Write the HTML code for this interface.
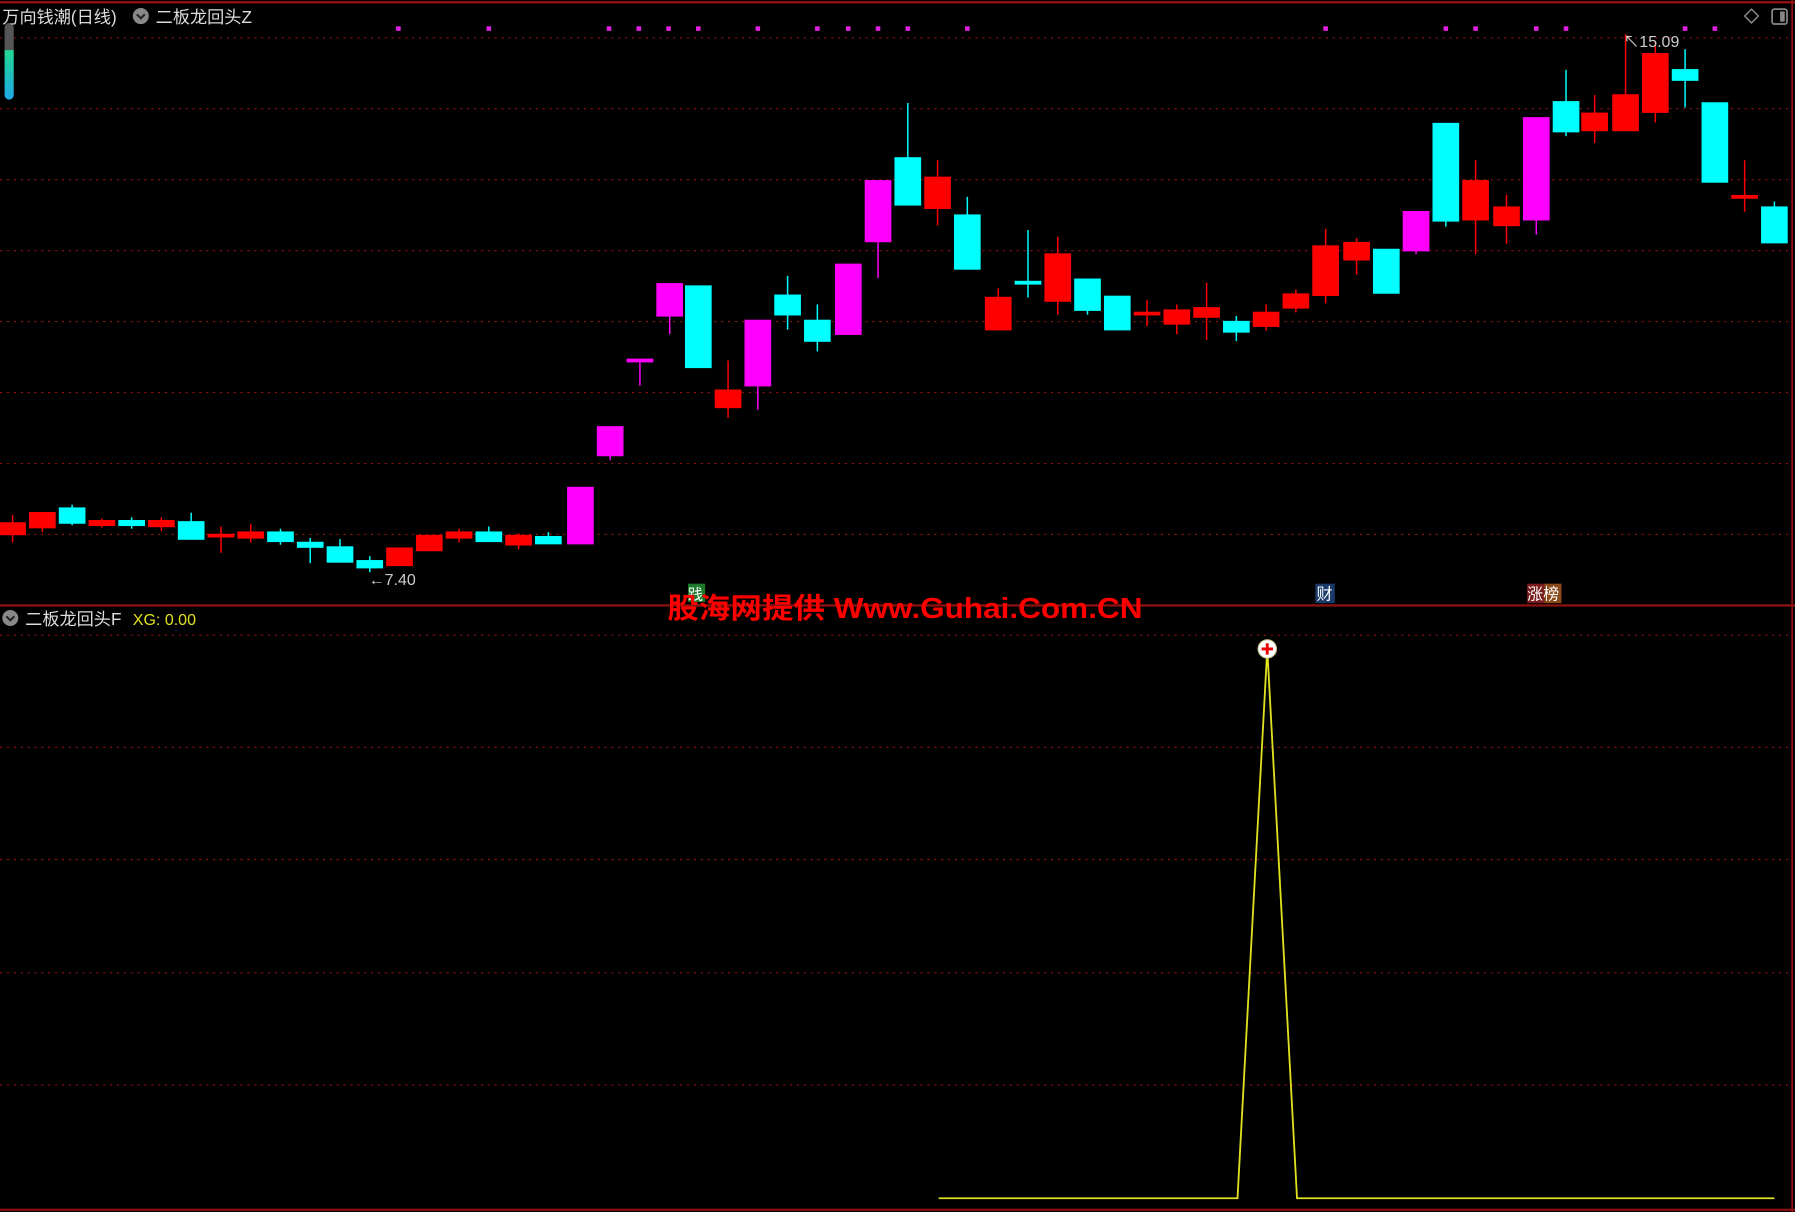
<!DOCTYPE html>
<html><head><meta charset="utf-8"><style>
html,body{margin:0;padding:0;background:#000;width:1795px;height:1212px;overflow:hidden}
svg{display:block}
text{font-family:"Liberation Sans","Noto Sans CJK SC",sans-serif}
</style></head><body>
<svg width="1795" height="1212" viewBox="0 0 1568 1059" preserveAspectRatio="none" xmlns="http://www.w3.org/2000/svg">
<rect width="1568" height="1059" fill="#000"/>
<g stroke="#8b1010" stroke-width="1" stroke-dasharray="2,4">
<line x1="0" y1="33" x2="1565" y2="33"/><line x1="0" y1="95" x2="1565" y2="95"/><line x1="0" y1="157" x2="1565" y2="157"/><line x1="0" y1="219" x2="1565" y2="219"/><line x1="0" y1="281" x2="1565" y2="281"/><line x1="0" y1="343" x2="1565" y2="343"/><line x1="0" y1="405" x2="1565" y2="405"/><line x1="0" y1="467" x2="1565" y2="467"/>
<line x1="0" y1="555" x2="1565" y2="555"/><line x1="0" y1="653" x2="1565" y2="653"/><line x1="0" y1="751" x2="1565" y2="751"/><line x1="0" y1="850" x2="1565" y2="850"/><line x1="0" y1="948" x2="1565" y2="948"/>
</g>
<line x1="0" y1="2" x2="1568" y2="2" stroke="#a01010" stroke-width="2"/>
<line x1="0" y1="529" x2="1568" y2="529" stroke="#8b1010" stroke-width="2"/>
<line x1="0" y1="1057" x2="1568" y2="1057" stroke="#8b1010" stroke-width="2"/>
<line x1="1565.5" y1="0" x2="1565.5" y2="1059" stroke="#8b1010" stroke-width="1.5"/>
<defs><linearGradient id="g" x1="0" y1="0" x2="0" y2="1"><stop offset="0" stop-color="#555"/><stop offset="0.35" stop-color="#555"/><stop offset="0.36" stop-color="#20d890"/><stop offset="1" stop-color="#20a8e8"/></linearGradient></defs>
<rect x="4" y="20" width="8" height="67" rx="4" fill="url(#g)"/>
<text x="2" y="20" fill="#ddd" font-size="15">万向钱潮(日线)</text>
<circle cx="123" cy="14" r="7" fill="#888"/><path d="M119.5 12.5 L123 16 L126.5 12.5" stroke="#222" stroke-width="1.8" fill="none"/>
<text x="136" y="20" fill="#ddd" font-size="15">二板龙回头Z</text>
<path d="M1530 8 L1536 14 L1530 20 L1524 14 Z" fill="none" stroke="#888" stroke-width="1.3"/>
<rect x="1548" y="8" width="13" height="13" rx="2" fill="none" stroke="#888" stroke-width="1.5"/><rect x="1555" y="10" width="4" height="9" fill="#888"/>
<g fill="#e020e0">
<rect x="346" y="23" width="4" height="4"/><rect x="425" y="23" width="4" height="4"/><rect x="530" y="23" width="4" height="4"/><rect x="556" y="23" width="4" height="4"/><rect x="582" y="23" width="4" height="4"/><rect x="608" y="23" width="4" height="4"/><rect x="660" y="23" width="4" height="4"/><rect x="712" y="23" width="4" height="4"/><rect x="739" y="23" width="4" height="4"/><rect x="765" y="23" width="4" height="4"/><rect x="791" y="23" width="4" height="4"/><rect x="843" y="23" width="4" height="4"/><rect x="1156" y="23" width="4" height="4"/><rect x="1261" y="23" width="4" height="4"/><rect x="1287" y="23" width="4" height="4"/><rect x="1340" y="23" width="4" height="4"/><rect x="1366" y="23" width="4" height="4"/><rect x="1470" y="23" width="4" height="4"/><rect x="1496" y="23" width="4" height="4"/>
</g>
<g stroke-width="1.3">
<!-- candles: wick then body -->
<g stroke="#f00" fill="#f00">
<line x1="11" y1="450" x2="11" y2="474"/><rect x="0" y="457" width="22" height="10"/>
<line x1="37" y1="448" x2="37" y2="465"/><rect x="26" y="448" width="22" height="13"/>
<rect x="78" y="455" width="22" height="4"/><line x1="89" y1="453" x2="89" y2="461"/>
<rect x="130" y="455" width="22" height="5"/><line x1="141" y1="452" x2="141" y2="464"/>
<line x1="193" y1="460" x2="193" y2="483"/><rect x="182" y="467" width="22" height="2"/>
<line x1="219" y1="458" x2="219" y2="474"/><rect x="208" y="465" width="22" height="5"/>
<rect x="338" y="479" width="22" height="15"/>
<rect x="364" y="468" width="22" height="13"/>
<line x1="401" y1="462" x2="401" y2="474"/><rect x="390" y="465" width="22" height="5"/>
<line x1="453" y1="466" x2="453" y2="480"/><rect x="442" y="468" width="22" height="8"/>
<line x1="636" y1="315" x2="636" y2="365"/><rect x="625" y="341" width="22" height="15"/>
<line x1="819" y1="140" x2="819" y2="197"/><rect x="808" y="155" width="22" height="27"/>
<line x1="872" y1="252" x2="872" y2="288"/><rect x="861" y="260" width="22" height="28"/>
<line x1="924" y1="207" x2="924" y2="275"/><rect x="913" y="222" width="22" height="41"/>
<line x1="1002" y1="262" x2="1002" y2="285"/><rect x="991" y="273" width="22" height="2"/>
<line x1="1028" y1="266" x2="1028" y2="292"/><rect x="1017" y="271" width="22" height="12"/>
<line x1="1054" y1="247" x2="1054" y2="297"/><rect x="1043" y="269" width="22" height="8"/>
<line x1="1106" y1="266" x2="1106" y2="289"/><rect x="1095" y="273" width="22" height="12"/>
<line x1="1132" y1="253" x2="1132" y2="273"/><rect x="1121" y="257" width="22" height="12"/>
<line x1="1158" y1="200" x2="1158" y2="265"/><rect x="1147" y="215" width="22" height="43"/>
<line x1="1185" y1="208" x2="1185" y2="240"/><rect x="1174" y="212" width="22" height="15"/>
<line x1="1289" y1="140" x2="1289" y2="222"/><rect x="1278" y="158" width="22" height="34"/>
<line x1="1316" y1="170" x2="1316" y2="213"/><rect x="1305" y="181" width="22" height="16"/>
<line x1="1393" y1="83" x2="1393" y2="125"/><rect x="1382" y="99" width="22" height="15"/>
<line x1="1420" y1="30" x2="1420" y2="114"/><rect x="1409" y="83" width="22" height="31"/>
<line x1="1446" y1="36" x2="1446" y2="107"/><rect x="1435" y="47" width="22" height="51"/>
<line x1="1524" y1="140" x2="1524" y2="185"/><rect x="1513" y="171" width="22" height="2"/>
</g>
<g stroke="#0ff" fill="#0ff">
<line x1="63" y1="441" x2="63" y2="459"/><rect x="52" y="444" width="22" height="13"/>
<line x1="115" y1="452" x2="115" y2="462"/><rect x="104" y="455" width="22" height="4"/>
<line x1="167" y1="448" x2="167" y2="471"/><rect x="156" y="456" width="22" height="15"/>
<line x1="245" y1="462" x2="245" y2="476"/><rect x="234" y="465" width="22" height="8"/>
<line x1="271" y1="470" x2="271" y2="492"/><rect x="260" y="474" width="22" height="4"/>
<line x1="297" y1="471" x2="297" y2="491"/><rect x="286" y="478" width="22" height="13"/>
<line x1="323" y1="486" x2="323" y2="500"/><rect x="312" y="490" width="22" height="6"/>
<line x1="427" y1="460" x2="427" y2="473"/><rect x="416" y="465" width="22" height="8"/>
<line x1="479" y1="465" x2="479" y2="475"/><rect x="468" y="469" width="22" height="6"/>
<rect x="599" y="250" width="22" height="71"/>
<line x1="688" y1="241" x2="688" y2="288"/><rect x="677" y="258" width="22" height="17"/>
<line x1="714" y1="266" x2="714" y2="307"/><rect x="703" y="280" width="22" height="18"/>
<line x1="793" y1="90" x2="793" y2="179"/><rect x="782" y="138" width="22" height="41"/>
<line x1="845" y1="172" x2="845" y2="235"/><rect x="834" y="188" width="22" height="47"/>
<line x1="898" y1="201" x2="898" y2="260"/><rect x="887" y="246" width="22" height="2"/>
<line x1="950" y1="244" x2="950" y2="275"/><rect x="939" y="244" width="22" height="27"/>
<rect x="965" y="259" width="22" height="29"/>
<line x1="1080" y1="276" x2="1080" y2="298"/><rect x="1069" y="281" width="22" height="9"/>
<rect x="1200" y="218" width="22" height="38"/>
<line x1="1263" y1="108" x2="1263" y2="198"/><rect x="1252" y="108" width="22" height="85"/>
<line x1="1368" y1="61" x2="1368" y2="119"/><rect x="1357" y="89" width="22" height="26"/>
<line x1="1472" y1="43" x2="1472" y2="94"/><rect x="1461" y="61" width="22" height="9"/>
<rect x="1487" y="90" width="22" height="69"/>
<line x1="1550" y1="176" x2="1550" y2="212"/><rect x="1539" y="181" width="22" height="31"/>
</g>
<g stroke="#f0f" fill="#f0f">
<rect x="496" y="426" width="22" height="49"/>
<line x1="533" y1="373" x2="533" y2="402"/><rect x="522" y="373" width="22" height="25"/>
<line x1="559" y1="314" x2="559" y2="337"/><rect x="548" y="314" width="22" height="2"/>
<line x1="585" y1="248" x2="585" y2="292"/><rect x="574" y="248" width="22" height="28"/>
<line x1="662" y1="280" x2="662" y2="358"/><rect x="651" y="280" width="22" height="57"/>
<rect x="730" y="231" width="22" height="61"/>
<line x1="767" y1="158" x2="767" y2="243"/><rect x="756" y="158" width="22" height="53"/>
<line x1="1237" y1="185" x2="1237" y2="222"/><rect x="1226" y="185" width="22" height="34"/>
<line x1="1342" y1="103" x2="1342" y2="205"/><rect x="1331" y="103" width="22" height="89"/>
</g>
</g>
<text x="322" y="511" fill="#ccc" font-size="14">←7.40</text>
<text x="1418" y="41" fill="#ccc" font-size="14">↖15.09</text>
<rect x="601" y="510" width="15" height="16" fill="#1a7a2a"/><text x="601" y="524" fill="#fff" font-size="13">践</text>
<rect x="1149" y="510" width="17" height="17" fill="#1a3a6a"/><text x="1150" y="524" fill="#fff" font-size="14">财</text>
<rect x="1334" y="510" width="15" height="17" fill="#7a1a1a"/><rect x="1349" y="510" width="15" height="17" fill="#8a4a1a"/><text x="1334" y="524" fill="#fff" font-size="14">涨榜</text>
<text x="583" y="540" fill="#ff0000" font-size="25" font-weight="bold" font-family="'Liberation Sans','Noto Sans CJK SC',sans-serif" textLength="415" lengthAdjust="spacingAndGlyphs">股海网提供 Www.Guhai.Com.CN</text>
<circle cx="9" cy="540" r="7" fill="#888"/><path d="M5.5 538.5 L9 542 L12.5 538.5" stroke="#222" stroke-width="1.8" fill="none"/>
<text x="22" y="546" fill="#ddd" font-size="15">二板龙回头F</text>
<text x="116" y="546" fill="#e0e020" font-size="14">XG: 0.00</text>
<polyline points="820,1047 1081,1047 1107,567 1133,1047 1550,1047" fill="none" stroke="#e0e020" stroke-width="1.6"/>
<circle cx="1107" cy="567" r="8" fill="#fff" stroke="#cc9" stroke-width="1"/>
<path d="M1102 567 H1112 M1107 562 V572" stroke="#e00" stroke-width="2.5"/>
</svg>
</body></html>
